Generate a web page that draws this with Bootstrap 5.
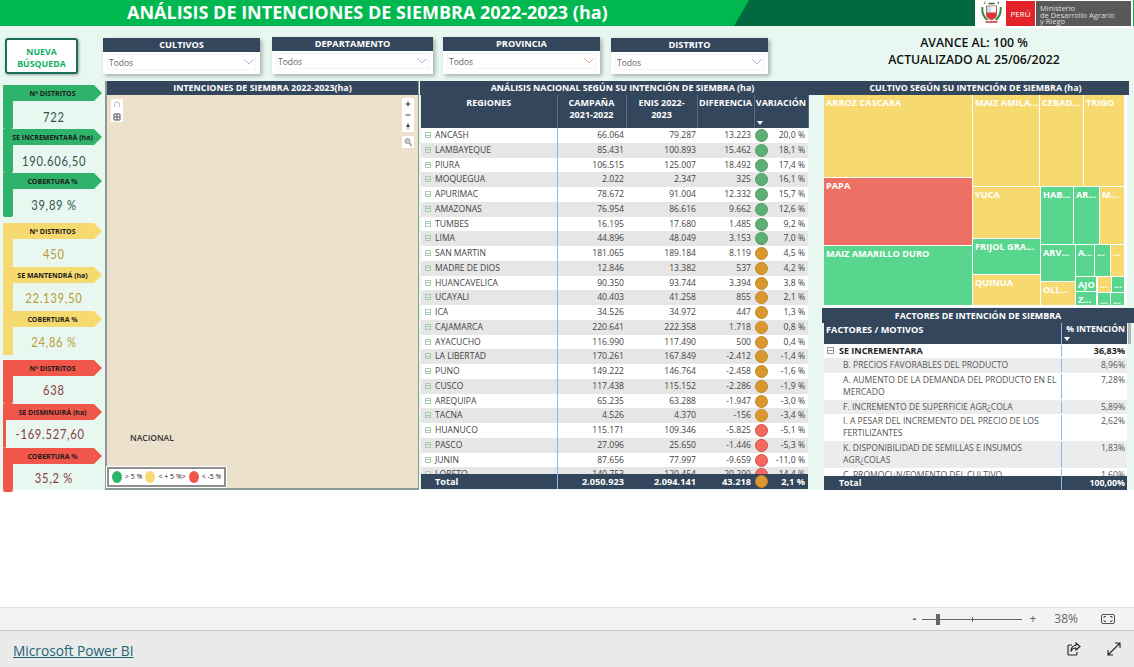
<!doctype html>
<html lang="es">

<head>
    <meta charset="utf-8">
    <meta name="viewport" content="width=device-width, initial-scale=1">
    <title>Microsoft Power BI</title>
    <link href="https://cdn.jsdelivr.net/npm/bootstrap@5.3.0/dist/css/bootstrap.min.css" rel="stylesheet">
    <style>
        html, body { height: 667px; overflow: hidden; }
        body { font-family: "Open Sans", "Liberation Sans", sans-serif; background: #fff; color: #333; }
        .page { height: 667px; }

        .report { height: 490px; background: #e8f8f0; }
        .top-band { height: 26px; background: #00b84f; }
        .top-title { width: 735px; padding-left: 127px; font-size: 18px; font-weight: 700; color: #fff; line-height: 25px; white-space: nowrap; }
        .top-dark { width: 241px; background: #00693f; clip-path: polygon(15px 0, 100% 0, 100% 100%, 0 100%); margin-left: -1px; }
        .logo-box { width: 158px; background: #fff; height: 28px; padding: 1px 2px 0 6px; position: relative; z-index: 2; }
        .logo-peru { width: 29px; height: 25px; background: #e3222a; color: #fff; font-size: 8px; line-height: 25px; text-align: center; margin-left: 4px; }
        .logo-min { width: 95px; height: 25px; background: #595959; color: #ddd; font-size: 7.5px; line-height: 6.5px; margin-left: 1px; padding: 4px 0 0 4px; white-space: nowrap; }

        .side-col { width: 103px; }
        .btn-nueva { display: block; margin: 12px 0 11px 5px; width: 73px; height: 36px; padding: 3px 0 0; background: #fff; border: 2px solid #1c6e5a; border-radius: 3px; box-shadow: 1px 1px 3px rgba(0, 0, 0, .35); color: #10b060; font-size: 8.8px; font-weight: 700; line-height: 12px; }
        .kpi-group { margin-left: 3px; width: 99px; }
        .kpi-box { height: 44px; }
        .kpi-tag { height: 16px; font-size: 7px; font-weight: 700; color: #1b1b1b; line-height: 17.5px; text-align: center; clip-path: polygon(0 0, 91px 0, 100% 50%, 91px 100%, 0 100%); white-space: nowrap; }
        .kpi-stripe { width: 10px; height: 28px; border-radius: 0 0 2px 2px; }
        .kpi-val { font-family: "Lato", sans-serif; font-size: 14px; letter-spacing: .9px; height: 28px; line-height: 32px; padding-right: 9px; white-space: nowrap; transform: scaleX(.8); }
        .kpi-g .kpi-tag, .kpi-g .kpi-stripe { background: #2fb36a; }
        .kpi-y .kpi-tag, .kpi-y .kpi-stripe { background: #f7da6f; }
        .kpi-r .kpi-tag, .kpi-r .kpi-stripe { background: #f0574a; }
        .kpi-g .kpi-val { color: #34524c; }
        .kpi-y .kpi-val { color: #b89b35; line-height: 30px; }
        .kpi-r .kpi-val { color: #8a3b40; line-height: 28px; }
        .kpi-y { margin-top: 6px; }
        .kpi-r { margin-top: 5px; }

        .filter-row { height: 55px; padding-top: 12px; }
        .filter-box { background: #fff; width: 157px; height: 36px; box-shadow: 2px 2px 4px rgba(0, 0, 0, .3); }
        .filter-lift { margin-top: -1px; height: 37px; width: 161px; margin-left: 12px; margin-right: 10px; }
        .filter-lift2 { margin-top: -1px; height: 37px; margin-right: 11px; }
        .dark-bar { background: #34465c; color: #fff; font-weight: 700; font-size: 8.9px; line-height: 14px; height: 14px; text-align: center; white-space: nowrap; }
        .filter-box .dark-bar { font-size: 9.2px; }
        .filter-sel { margin: 2px 4px; height: 16px; padding: 0 1px; font-size: 8.5px; color: #666; line-height: 17px; border: 1px solid #f3f3f3; }
        .avance { width: 320px; margin-left: auto; margin-top: -3px; font-size: 12.3px; font-weight: 600; color: #111; line-height: 16.5px; text-align: center; }

        .panel-row { height: 409px; }
        .map-panel { width: 314px; margin-left: 2px; border: 1px solid #8b9b94; border-width: 0 1px 2px 2px; }
        .map-area { height: 393px; background: #ebe1cc; }
        .map-btns { position: absolute; background: #fff; width: 12px; border-radius: 1px; line-height: 0; }
        .map-nac { position: absolute; left: 23px; top: 337px; font-size: 8.5px; font-weight: 600; color: #333; }
        .map-legend { position: absolute; left: 0; top: 372px; width: 119px; height: 20px; background: #fff; border: 2px solid #8e8e8e; outline: 1px solid #fff; font-size: 7px; color: #222; gap: 3px; padding-left: 3px; white-space: nowrap; }
        .dot-lg { width: 10px; height: 12px; border-radius: 50%; flex: none; }

        .table-panel { width: 400px; margin-left: 1px; }
        .table-panel .dark-bar { width: 405px; margin-right: -5px; position: relative; z-index: 1; }
        .cols-wrap { width: 387px; margin-left: 1px; }
        .data-tbl { table-layout: fixed; width: 387px; margin: 0; font-size: 8.6px; --bs-table-bg: transparent; color: #444; }
        .data-tbl td, .data-tbl th { padding: 1px 2px 0 0; height: 14.75px; line-height: 13.75px; border: 0; text-align: right; white-space: nowrap; overflow: hidden; box-shadow: none; background: none; color: inherit; }
        .data-tbl td:nth-child(3) { padding-right: 1px; }
        .data-tbl td:nth-child(4), .data-tbl td:nth-child(6) { padding-right: 3px; }
        .data-tbl td.reg { text-align: left; padding-left: 4px; border-right: 1px solid #8ab8e8; }
        .data-tbl tr.alt td { background: #e6e6e6; }
        .data-tbl td.dot-cell { padding: 1px 0 0 1px; text-align: left; overflow: visible; }
        .row-dot { display: block; width: 13px; height: 13px; border-radius: 50%; border: 1px solid; }
        .dot-g { background: #5fae74; border-color: #4c9a62; }
        .dot-o { background: #d9982f; border-color: #c58624; }
        .dot-r { background: #f26a60; border-color: #d64a42; }
        .exp-box { display: inline-block; width: 6px; height: 6px; border: 1px solid #a9cbb0; margin-right: 4px; background: linear-gradient(#a9cbb0, #a9cbb0) center / 100% 1px no-repeat; }
        .head-tbl { color: #fff; }
        .head-tbl th { background: #34465c; height: 33px; line-height: 11.8px; font-size: 9px; font-weight: 700; text-align: center; vertical-align: top; padding: 2px 0 0; border-right: 1px solid #5a6a7e; white-space: nowrap; position: relative; color: #fff; }
        .sort-mark { position: absolute; left: 2px; bottom: 3px; border: 3px solid transparent; border-top: 4px solid #fff; border-bottom: 0; }
        .rows-clip { height: 346px; overflow: hidden; background: #fff; }
        .foot-tbl { font-size: 9.2px; }
        .foot-tbl td { background: #34465c; color: #fff; font-weight: 700; }
        .foot-tbl td.reg { padding-left: 14px; }

        .right-col { width: 312px; margin-left: 2px; }
        .right-col .tree-title { width: 307px; margin-left: 0; }
        .tree-area { position: relative; height: 212px; background: #fff; margin-left: 2px; width: 303px; }
        .tile { position: absolute; color: #fff; font-size: 9.2px; font-weight: 700; padding: 2px 2px; line-height: 12px; overflow: hidden; white-space: nowrap; }
        .tile-y { background: #f7da6f; }
        .tile-r { background: #ee7064; }
        .tile-g { background: #58d68d; }
        .fact-title { height: 15px; line-height: 15px; margin-top: 1px; }
        .fact-wrap { width: 303px; margin-left: 2px; position: relative; }
        .fact-head { height: 21px; background: #34465c; color: #fff; font-size: 9.2px; font-weight: 700; line-height: 13px; }
        .fact-c1 { width: 238px; padding-left: 2px; border-right: 1px solid #8ab8e8; }
        .fact-c2 { width: 65px; padding-right: 2px; text-align: right; position: relative; }
        .fact-head .fact-c2 { font-size: 8.6px; }
        .fact-scroll { position: absolute; left: 304px; top: 0; width: 3px; height: 21px; background: #b5b5b5; }
        .fact-rows { height: 132px; overflow: hidden; background: #fff; font-size: 8.6px; color: #555; line-height: 12.4px; }
        .fact-line { padding: 1px 0; }
        .fact-line.alt { background: #ececec; }
        .fact-line.lvl0 { color: #222; font-weight: 700; font-size: 9px; }
        .fact-line.lvl0 .fact-c1 { padding-left: 3px; }
        .fact-line .fact-c1 { padding-left: 19px; padding-right: 1px; }
        .fact-line .fact-c2 { color: #555; }
        .fact-line.lvl0 .fact-c2 { color: #222; }
        .exp-minus { display: inline-block; width: 7px; height: 7px; border: 1px solid #999; margin-right: 5px; background: linear-gradient(#999, #999) center / 100% 1px no-repeat; }
        .fact-foot { height: 14px; background: #34465c; color: #fff; font-size: 8.8px; font-weight: 700; line-height: 14px; }
        .fact-foot .fact-c1 { padding-left: 15px; }

        .zoom-bar { height: 23px; margin-top: 117px; background: #f3f3f3; border-top: 1px solid #e0e0e0; color: #666; font-size: 12px; }
        .zoom-minus { font-weight: 700; }
        .zoom-slider { position: relative; width: 100px; height: 1px; background: #666; margin: 0 7px 0 6px; }
        .zoom-thumb { position: absolute; left: 14px; top: -5px; width: 4px; height: 11px; background: #666; }
        .zoom-tick { position: absolute; left: 50px; top: -2px; width: 1px; height: 5px; background: #666; }
        .zoom-pct { margin-left: 18px; margin-right: 23px; }
        .zoom-end { width: 19px; }
        .foot-bar { height: 37px; background: #eaeaea; border-top: 1px solid #c8c8c8; }
        .pbi-link { color: #1a6478; font-family: "Open Sans", sans-serif; font-size: 13.7px; text-decoration: underline; margin: 4px 0 0 13px; }
        .foot-ico2 { margin: 0 13px 0 26px; }
    </style>
</head>

<body>
    <div class="page d-flex flex-column">
        <div class="report">
            <div class="top-band d-flex">
                <div class="top-title">ANÁLISIS DE INTENCIONES DE SIEMBRA 2022-2023 (ha)</div>
                <div class="top-dark"></div>
                <div class="logo-box d-flex">
                    <svg width="21" height="24" viewBox="0 0 20 24">
                        <path d="M3 3a7 7 0 0 1 14 0" fill="none" stroke="#4a7a4a" stroke-width="1.400" stroke-dasharray="1.500 1" />
                        <path d="M1 6c-1 6 2 11 5 13M19 6c1 6-2 11-5 13" fill="none" stroke="#3d8a3d" stroke-width="2" />
                        <path d="M5 5h10v9c0 3-3 4-5 5-2-1-5-2-5-5z" fill="#fff" stroke="#a33" stroke-width=".8" />
                        <rect x="5.500" y="5.500" width="4.500" height="6" fill="#bfe0ee" />
                        <rect x="10" y="5.500" width="4.500" height="6" fill="#fff" />
                        <path d="M5.500 11.500h9v3c0 2-3 3.500-4.500 4-1.500-.5-4.500-2-4.500-4z" fill="#d33" />
                        <path d="M4 21h12" stroke="#c33" stroke-width="1.500" />
                        <path d="M7 2.500h6" stroke="#2a6a2a" stroke-width="1.500" />
                    </svg>
                    <div class="logo-peru">PERÚ</div>
                    <div class="logo-min">Ministerio<br>de Desarrollo Agrario<br>y Riego</div>
                </div>
            </div>

            <div class="d-flex">
                <div class="side-col">
                    <button class="btn-nueva">NUEVA<br>BÚSQUEDA</button>
                    <div id="kpis"></div>
                </div>

                <div class="flex-grow-1">
                    <div class="filter-row d-flex" id="filters">
                        <div class="avance">AVANCE AL: 100 %<br>ACTUALIZADO AL 25/06/2022</div>
                    </div>

                    <div class="panel-row d-flex">
                        <div class="map-panel">
                            <div class="dark-bar">INTENCIONES DE SIEMBRA 2022-2023(ha)</div>
                            <div class="map-area position-relative">
                                <div class="map-btns" style="left:4px;top:4px;height:23px">
                                    <svg width="12" height="23" viewBox="0 0 12 23">
                                        <path d="M3.500 8V5.500a2.500 2.500 0 0 1 5 0V8" fill="none" stroke="#bbb" />
                                        <path d="M3 15h6v6H3zM6 15v6M3 18h6" fill="none" stroke="#555" />
                                    </svg>
                                </div>
                                <div class="map-btns" style="left:295px;top:3px;height:34px">
                                    <svg width="12" height="34" viewBox="0 0 12 34">
                                        <path d="M3.500 6h5M6 3.500v5M3.500 17h5" stroke="#444" stroke-width="1.200" />
                                        <path d="M6 25l2 4H4z" fill="#444" />
                                        <path d="M6 29v3" stroke="#999" />
                                    </svg>
                                </div>
                                <div class="map-btns" style="left:295px;top:41px;height:12px">
                                    <svg width="12" height="12" viewBox="0 0 12 12" fill="none" stroke="#999">
                                        <circle cx="5.500" cy="5" r="2.500" fill="#ccc" />
                                        <path d="M7.500 7l2 3" stroke-width="1.500" />
                                    </svg>
                                </div>
                                <div class="map-nac">NACIONAL</div>
                                <div class="map-legend d-flex align-items-center">
                                    <span class="dot-lg" style="background:#2fb36a"></span>&gt; 5 %
                                    <span class="dot-lg" style="background:#f7da6f"></span>&lt; + 5 %&gt;
                                    <span class="dot-lg" style="background:#f0574a"></span>&lt; -5 %
                                </div>
                            </div>
                        </div>

                        <div class="table-panel">
                            <div class="dark-bar">ANÁLISIS NACIONAL SEGÚN SU INTENCIÓN DE SIEMBRA (ha)</div>
                            <div class="cols-wrap">
                                <table class="table data-tbl head-tbl">
                                    <colgroup><col style="width:136px"><col style="width:69px"><col style="width:71px"><col style="width:57px"><col style="width:54px"></colgroup>
                                    <tr>
                                        <th>REGIONES</th>
                                        <th>CAMPAÑA<br>2021-2022</th>
                                        <th>ENIS 2022-<br>2023</th>
                                        <th>DIFERENCIA</th>
                                        <th>VARIACIÓN<span class="sort-mark"></span></th>
                                    </tr>
                                </table>
                                <div class="rows-clip">
                                    <table class="table data-tbl" id="regBody">
                                        <colgroup><col style="width:136px"><col style="width:69px"><col style="width:71px"><col style="width:57px"><col style="width:14px"><col style="width:40px"></colgroup>
                                    </table>
                                </div>
                                <table class="table data-tbl foot-tbl">
                                    <colgroup><col style="width:136px"><col style="width:69px"><col style="width:71px"><col style="width:57px"><col style="width:14px"><col style="width:40px"></colgroup>
                                    <tr>
                                        <td class="reg">Total</td>
                                        <td>2.050.923</td>
                                        <td>2.094.141</td>
                                        <td>43.218</td>
                                        <td class="dot-cell"><span class="row-dot dot-o"></span></td>
                                        <td>2,1 %</td>
                                    </tr>
                                </table>
                            </div>
                        </div>

                        <div class="right-col">
                            <div class="dark-bar tree-title">CULTIVO SEGÚN SU INTENCIÓN DE SIEMBRA (ha)</div>
                            <div class="tree-area" id="tree"></div>
                            <div class="dark-bar fact-title">FACTORES DE INTENCIÓN DE SIEMBRA</div>
                            <div class="fact-wrap">
                                <div class="fact-head d-flex">
                                    <div class="fact-c1">FACTORES / MOTIVOS</div>
                                    <div class="fact-c2">% INTENCIÓN<span class="sort-mark"></span></div>
                                </div>
                                <div class="fact-scroll"></div>
                                <div class="fact-rows" id="factRows"></div>
                                <div class="fact-foot d-flex">
                                    <div class="fact-c1">Total</div>
                                    <div class="fact-c2">100,00%</div>
                                </div>
                            </div>
                        </div>
                    </div>
                </div>
            </div>
        </div>

        <div class="zoom-bar d-flex align-items-center">
            <div class="ms-auto d-flex align-items-center">
                <span class="zoom-minus">-</span>
                <div class="zoom-slider"><div class="zoom-thumb"></div><div class="zoom-tick"></div></div>
                <span>+</span>
                <span class="zoom-pct">38%</span>
                <svg width="14" height="10" viewBox="0 0 14 10" fill="none" stroke="#555">
                    <rect x=".5" y=".5" width="13" height="9" rx="1.500" />
                    <path d="M3 4V2.500h2M11 4V2.500H9M3 6v1.500h2M11 6v1.500H9" />
                </svg>
                <span class="zoom-end"></span>
            </div>
        </div>

        <div class="foot-bar d-flex align-items-center">
            <a href="#" class="pbi-link">Microsoft Power BI</a>
            <svg class="ms-auto" width="14" height="14" viewBox="0 0 14 14" fill="none" stroke="#222" stroke-width="1.100">
                <path d="M5 3H2a1 1 0 0 0-1 1v8a1 1 0 0 0 1 1h7a1 1 0 0 0 1-1v-2" />
                <path d="M9 1l4 3.500L9 8V6C6.500 6 5 7 4 9.500 4 6 6 3.500 9 3.200z" />
            </svg>
            <svg class="foot-ico2" width="14" height="14" viewBox="0 0 14 14" fill="none" stroke="#222" stroke-width="1.100">
                <path d="M1.500 12.500L12.500 1.500M8 1h5v5M1 8v5h5" />
            </svg>
        </div>
    </div>

    <script>
        // kpi blocks on the left
        var kpis = [
            ["kpi-g", "Nº DISTRITOS", "722"], ["kpi-g", "SE INCREMENTARÁ (ha)", "190.606,50"], ["kpi-g", "COBERTURA %", "39,89 %"],
            ["kpi-y", "Nº DISTRITOS", "450"], ["kpi-y", "SE MANTENDRÁ (ha)", "22.139,50"], ["kpi-y", "COBERTURA %", "24,86 %"],
            ["kpi-r", "Nº DISTRITOS", "638"], ["kpi-r", "SE DISMINUIRÁ (ha)", "-169.527,60"], ["kpi-r", "COBERTURA %", "35,2 %"]
        ];
        var kpiHtml = "";
        for (var i = 0; i < kpis.length; i += 3) {
            kpiHtml += '<div class="kpi-group ' + kpis[i][0] + '">';
            for (var j = i; j < i + 3; j++) {
                kpiHtml += '<div class="kpi-box"><div class="kpi-tag">' + kpis[j][1] + '</div>' +
                    '<div class="d-flex"><div class="kpi-stripe"></div><div class="kpi-val flex-grow-1 d-flex justify-content-center">' + kpis[j][2] + '</div></div></div>';
            }
            kpiHtml += '</div>';
        }
        document.getElementById("kpis").innerHTML = kpiHtml;

        // slicers
        var filters = ["CULTIVOS", "DEPARTAMENTO", "PROVINCIA", "DISTRITO"];
        var lifts = ["", "filter-lift", "filter-lift2", ""];
        var chevColor = ["#9db8d8", "#9db8d8", "#e0b090", "#9db8d8"];
        var filterHtml = "";
        for (var f = 0; f < filters.length; f++) {
            filterHtml += '<div class="filter-box ' + lifts[f] + '"><div class="dark-bar">' + filters[f] + '</div>' +
                '<div class="filter-sel d-flex justify-content-between align-items-center"><span>Todos</span>' +
                '<svg width="10" height="6" viewBox="0 0 10 6" fill="none" stroke="' + chevColor[f] + '"><path d="M.5.5L5 5 9.500.5"/></svg></div></div>';
        }
        document.getElementById("filters").insertAdjacentHTML("afterbegin", filterHtml);

        // regions table
        var regs = [
            ["ANCASH", "66.064", "79.287", "13.223", "g", "20,0 %"], ["LAMBAYEQUE", "85.431", "100.893", "15.462", "g", "18,1 %"],
            ["PIURA", "106.515", "125.007", "18.492", "g", "17,4 %"], ["MOQUEGUA", "2.022", "2.347", "325", "g", "16,1 %"],
            ["APURIMAC", "78.672", "91.004", "12.332", "g", "15,7 %"], ["AMAZONAS", "76.954", "86.616", "9.662", "g", "12,6 %"],
            ["TUMBES", "16.195", "17.680", "1.485", "g", "9,2 %"], ["LIMA", "44.896", "48.049", "3.153", "g", "7,0 %"],
            ["SAN MARTIN", "181.065", "189.184", "8.119", "o", "4,5 %"], ["MADRE DE DIOS", "12.846", "13.382", "537", "o", "4,2 %"],
            ["HUANCAVELICA", "90.350", "93.744", "3.394", "o", "3,8 %"], ["UCAYALI", "40.403", "41.258", "855", "o", "2,1 %"],
            ["ICA", "34.526", "34.972", "447", "o", "1,3 %"], ["CAJAMARCA", "220.641", "222.358", "1.718", "o", "0,8 %"],
            ["AYACUCHO", "116.990", "117.490", "500", "o", "0,4 %"], ["LA LIBERTAD", "170.261", "167.849", "-2.412", "o", "-1,4 %"],
            ["PUNO", "149.222", "146.764", "-2.458", "o", "-1,6 %"], ["CUSCO", "117.438", "115.152", "-2.286", "o", "-1,9 %"],
            ["AREQUIPA", "65.235", "63.288", "-1.947", "o", "-3,0 %"], ["TACNA", "4.526", "4.370", "-156", "o", "-3,4 %"],
            ["HUANUCO", "115.171", "109.346", "-5.825", "r", "-5,1 %"], ["PASCO", "27.096", "25.650", "-1.446", "r", "-5,3 %"],
            ["JUNIN", "87.656", "77.997", "-9.659", "r", "-11,0 %"], ["LORETO", "140.753", "120.454", "-20.299", "r", "-14,4 %"]
        ];
        var regHtml = "";
        for (var r = 0; r < regs.length; r++) {
            var d = regs[r];
            regHtml += '<tr class="' + (r % 2 ? "alt" : "") + '"><td class="reg"><span class="exp-box"></span>' + d[0] + '</td>' +
                '<td>' + d[1] + '</td><td>' + d[2] + '</td><td>' + d[3] + '</td>' +
                '<td class="dot-cell"><span class="row-dot dot-' + d[4] + '"></span></td><td>' + d[5] + '</td></tr>';
        }
        document.getElementById("regBody").insertAdjacentHTML("beforeend", regHtml);

        // treemap tiles: label, colour, x1, y1, x2, y2 in page pixels
        var tiles = [
            ["ARROZ CASCARA", "y", 824, 95, 972, 177], ["PAPA", "r", 824, 178, 972, 245], ["MAIZ AMARILLO DURO", "g", 824, 246, 972, 305],
            ["MAIZ AMILA...", "y", 973, 95, 1039, 186], ["CEBAD...", "y", 1040, 95, 1083, 186], ["TRIGO", "y", 1084, 95, 1124, 186],
            ["YUCA", "y", 973, 187, 1040, 238], ["FRIJOL GRA...", "g", 973, 239, 1040, 274], ["QUINUA", "y", 973, 275, 1040, 305],
            ["HAB...", "g", 1041, 187, 1073, 244], ["AR...", "g", 1074, 187, 1099, 244], ["M...", "y", 1100, 187, 1124, 244],
            ["ARV...", "g", 1041, 245, 1075, 281], ["OLL...", "y", 1041, 282, 1075, 305],
            ["A...", "g", 1076, 245, 1094, 276], ["...", "g", 1095, 245, 1110, 276], ["...", "y", 1111, 245, 1124, 276],
            ["AJO", "g", 1076, 277, 1096, 291], ["...", "y", 1098, 277, 1111, 292], ["...", "g", 1112, 277, 1124, 292],
            ["Z...", "g", 1076, 292, 1096, 305], ["...", "g", 1098, 293, 1110, 305], ["...", "g", 1111, 293, 1124, 305]
        ];
        var treeHtml = "";
        for (var t = 0; t < tiles.length; t++) {
            var k = tiles[t];
            treeHtml += '<div class="tile tile-' + k[1] + '" style="left:' + (k[2] - 824) + 'px;top:' + (k[3] - 95) + 'px;width:' + (k[4] - k[2]) + 'px;height:' + (k[5] - k[3]) + 'px">' + k[0] + '</div>';
        }
        document.getElementById("tree").innerHTML = treeHtml;

        // factors matrix
        var facts = [
            ["lvl0", "SE INCREMENTARA", "36,83%"],
            ["alt", "B. PRECIOS FAVORABLES DEL PRODUCTO", "8,96%"],
            ["", "A. AUMENTO DE LA DEMANDA DEL PRODUCTO EN EL MERCADO", "7,28%"],
            ["alt", "F. INCREMENTO DE SUPERFICIE AGR¿COLA", "5,89%"],
            ["", "I. A PESAR DEL INCREMENTO DEL PRECIO DE LOS FERTILIZANTES", "2,62%"],
            ["alt", "K. DISPONIBILIDAD DE SEMILLAS E INSUMOS AGR¿COLAS", "1,83%"],
            ["", "C. PROMOCI¿N/FOMENTO DEL CULTIVO", "1,60%"]
        ];
        var factHtml = "";
        for (var n = 0; n < facts.length; n++) {
            var x = facts[n];
            factHtml += '<div class="fact-line d-flex ' + x[0] + '"><div class="fact-c1">' +
                (x[0] == "lvl0" ? '<span class="exp-minus"></span>' : '') + x[1] + '</div><div class="fact-c2">' + x[2] + '</div></div>';
        }
        document.getElementById("factRows").innerHTML = factHtml;
    </script>

    <script src="https://cdn.jsdelivr.net/npm/bootstrap@5.3.0/dist/js/bootstrap.bundle.min.js"></script>
</body>

</html>
